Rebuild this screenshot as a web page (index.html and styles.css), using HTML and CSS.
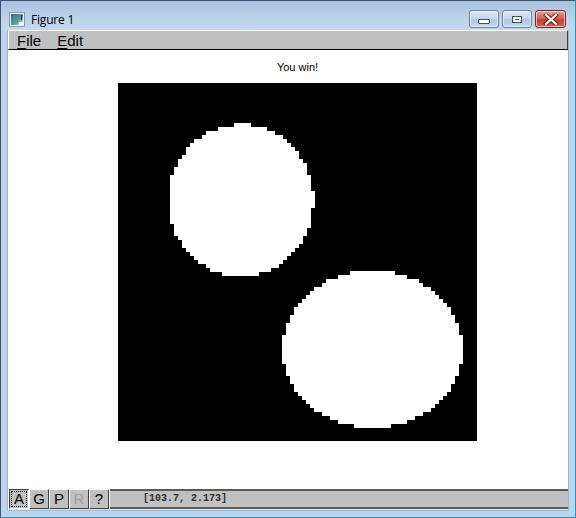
FILE: index.html
```html
<!DOCTYPE html>
<html>
<head>
<meta charset="utf-8">
<link rel="stylesheet" href="styles.css">
</head>
<body>
<div class="window">
  <div class="titlebar">
    <div class="title-left">
      <span class="app-icon"><span class="app-icon-inner"></span><span class="app-icon-dot"></span></span>
      <span class="title-text">Figure 1</span>
    </div>
    <div class="controls">
      <span class="ctl ctl-min"><span class="min-glyph"></span></span>
      <span class="ctl ctl-max"><span class="max-glyph"></span></span>
      <span class="ctl ctl-close">
        <svg width="16" height="11" viewBox="0 0 16 11"><path d="M3 1 L13 10 M13 1 L3 10" stroke="#5a1a14" stroke-width="4" stroke-linecap="square"/><path d="M3 1 L13 10 M13 1 L3 10" stroke="#ffffff" stroke-width="2.2" stroke-linecap="square"/></svg>
      </span>
    </div>
  </div>
  <div class="client">
    <div class="menubar">
      <span class="menu-item"><u>F</u>ile</span>
      <span class="menu-item"><u>E</u>dit</span>
    </div>
    <div class="figure">
      <div class="axes-wrap">
        <div class="plot-title">You win!</div>
        <svg class="axes" width="359" height="358" viewBox="0 0 359 358" shape-rendering="crispEdges">
          <defs>
            <filter id="pixelate" x="0" y="0" width="1" height="1" filterUnits="objectBoundingBox" primitiveUnits="userSpaceOnUse">
              <feFlood x="2" y="2" width="1" height="1" flood-color="#000"/>
              <feComposite x="0" y="0" width="4" height="4"/>
              <feTile result="grid"/>
              <feComposite in="SourceGraphic" in2="grid" operator="in"/>
              <feMorphology operator="dilate" radius="2"/>
            </filter>
          </defs>
          <rect x="0" y="0" width="359" height="358" fill="#000"/>
          <g filter="url(#pixelate)">
            <rect x="0" y="0" width="359" height="358" fill="#000"/>
            <ellipse cx="123" cy="117.5" rx="72" ry="75.5" fill="#fff"/>
            <ellipse cx="254.5" cy="266" rx="89.5" ry="78" fill="#fff"/>
          </g>
        </svg>
      </div>
    </div>
    <div class="toolbar">
      <span class="tbtn tbtn-focus"><span class="focus-ring">A</span></span>
      <span class="tbtn">G</span>
      <span class="tbtn">P</span>
      <span class="tbtn tbtn-disabled">R</span>
      <span class="tbtn">?</span>
      <span class="status">[103.7, 2.173]</span>
    </div>
  </div>
</div>
</body>
</html>
```
FILE: styles.css
```css
html, body {
  margin: 0;
  padding: 0;
  width: 576px;
  height: 518px;
  overflow: hidden;
  background: #ffffff;
}
.window {
  box-sizing: border-box;
  width: 576px;
  height: 518px;
  border: 1px solid #3b5570;
  border-right-color: #1a9cbf;
  border-bottom-color: #1a9cbf;
  background: #bcd4ec;
  display: flex;
  flex-direction: column;
}
.titlebar {
  height: 29px;
  flex: none;
  display: flex;
  align-items: flex-start;
  justify-content: space-between;
  background: linear-gradient(#a9c2de, #bcd2ea 60%, #c4d9ef);
}
.title-left {
  display: flex;
  align-items: center;
  padding-left: 9px;
  padding-top: 10px;
}
.app-icon {
  position: relative;
  width: 14px;
  height: 13px;
  box-sizing: border-box;
  border: 1px solid #eef3f8;
  outline: 1px solid #8a9aa8;
  background: linear-gradient(135deg, #2f6a8a, #5aa39a 60%, #d8e6ee);
  display: inline-block;
}
.app-icon-inner {
  position: absolute;
  right: 0;
  bottom: 0;
  width: 4px;
  height: 3px;
  background: #f4f8fb;
}
.app-icon-dot {
  position: absolute;
  right: 1px;
  top: 1px;
  width: 1px;
  height: 5px;
  background: #1d2f40;
}
.title-text {
  font-family: "Open Sans", "DejaVu Sans", sans-serif;
  font-size: 12px;
  color: #000;
  margin-left: 7px;
  letter-spacing: -0.2px;
}
.controls {
  display: flex;
  gap: 3px;
  padding-top: 9px;
  padding-right: 9px;
}
.ctl {
  box-sizing: border-box;
  height: 18px;
  width: 31px;
  border: 1px solid #6a82a0;
  border-radius: 3px;
  display: flex;
  align-items: center;
  justify-content: center;
  box-shadow: inset 0 0 0 1px rgba(255,255,255,0.55);
}
.ctl-min, .ctl-max {
  width: 30px;
  background: linear-gradient(#dbe7f4, #c3d5ea 48%, #aec6e2 52%, #c2d7ee);
}
.ctl-close {
  width: 31px;
  border-color: #7a2a22;
  background: linear-gradient(#e8a196, #d06556 45%, #c23f2f 55%, #d26a55);
}
.min-glyph {
  width: 10px;
  height: 3px;
  margin-top: 5px;
  background: #fff;
  border: 1px solid #3f5470;
  border-radius: 1px;
}
.max-glyph {
  width: 8px;
  height: 5px;
  border: 1px solid #3f5470;
  background: #fff;
  box-shadow: inset 0 0 0 2px #fff, inset 0 0 0 3px #3f5470;
}
.client {
  flex: 1;
  margin: 0 6px 6px 6px;
  display: flex;
  flex-direction: column;
  background: #ffffff;
  border-left: 1px solid #9fb6cc;
  border-right: 1px solid #9fb6cc;
  border-bottom: 1px solid #9fb6cc;
}
.menubar {
  height: 20px;
  flex: none;
  box-sizing: border-box;
  background: #c0c0c0;
  border-top: 1px solid #ffffff;
  border-left: 1px solid #ffffff;
  border-right: 1px solid #404040;
  border-bottom: 1px solid #000000;
  display: flex;
  align-items: center;
  font-family: "Liberation Sans", Arial, sans-serif;
  font-size: 15px;
  color: #000;
}
.menu-item {
  padding-left: 8px;
  padding-right: 8px;
  line-height: 17px;
}
.menu-item u {
  text-decoration-thickness: 1px;
  text-underline-offset: 2px;
}
.figure {
  flex: 1;
  background: #fff;
}
.axes-wrap {
  width: 359px;
  margin-left: 110px;
  display: flex;
  flex-direction: column;
}
.plot-title {
  font-family: "Liberation Sans", Arial, sans-serif;
  font-size: 11px;
  text-align: center;
  color: #000;
  padding-top: 11px;
  height: 33px;
  box-sizing: border-box;
  line-height: 13px;
}
.axes {
  display: block;
}
.toolbar {
  height: 22px;
  flex: none;
  box-sizing: border-box;
  display: flex;
  align-items: flex-start;
  background: #ffffff;
  padding-top: 1px;
  padding-left: 1px;
  border-bottom: 1px solid #e6e6e6;
  font-family: "Liberation Sans", Arial, sans-serif;
  font-size: 15px;
}
.tbtn {
  box-sizing: border-box;
  width: 20px;
  height: 20px;
  background: #c0c0c0;
  border-top: 1px solid #ffffff;
  border-left: 1px solid #ffffff;
  border-right: 1px solid #404040;
  border-bottom: 1px solid #404040;
  display: flex;
  align-items: center;
  justify-content: center;
  color: #000;
  line-height: 16px;
}
.tbtn-focus {
  border-top-color: #404040;
  border-left-color: #404040;
  border-right-color: #ffffff;
  border-bottom-color: #ffffff;
}
.focus-ring {
  box-sizing: border-box;
  width: 16px;
  height: 16px;
  border: 1px dotted #000;
  display: flex;
  align-items: center;
  justify-content: center;
}
.tbtn-disabled {
  color: #a0a0a0;
}
.status {
  flex: 1;
  box-sizing: border-box;
  height: 20px;
  margin-left: 1px;
  background: #c0c0c0;
  border-top: 2px solid #5a5a5a;
  border-bottom: 2px solid #5a5a5a;
  font-family: "Liberation Mono", "Courier New", monospace;
  font-size: 10px;
  font-weight: bold;
  color: #303030;
  padding-left: 33px;
  line-height: 16px;
}
```
